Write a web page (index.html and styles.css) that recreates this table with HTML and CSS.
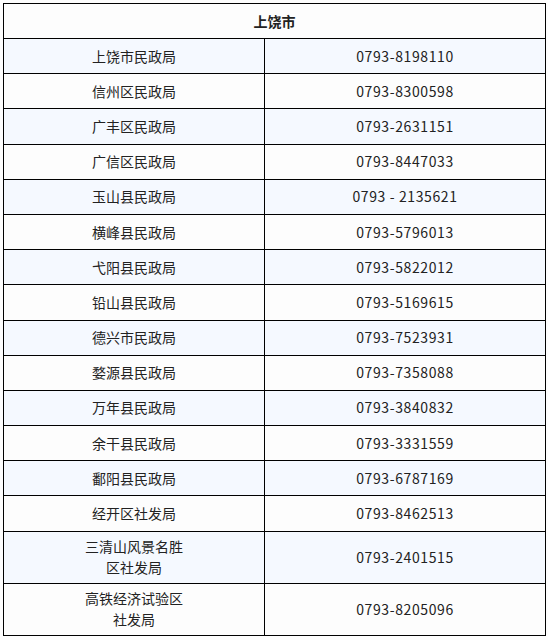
FILE: index.html
```html
<!DOCTYPE html>
<html lang="zh-CN">
<head>
<meta charset="utf-8">
<title>上饶市</title>
<link rel="stylesheet" href="styles.css">
</head>
<body>
<table class="contacts">
  <colgroup><col class="col-name"><col class="col-phone"></colgroup>
  <thead>
    <tr><th colspan="2">上饶市</th></tr>
  </thead>
  <tbody>
    <tr class="alt"><td>上饶市民政局</td><td class="tel">0793-8198110</td></tr>
    <tr><td>信州区民政局</td><td class="tel">0793-8300598</td></tr>
    <tr class="alt"><td>广丰区民政局</td><td class="tel">0793-2631151</td></tr>
    <tr><td>广信区民政局</td><td class="tel">0793-8447033</td></tr>
    <tr class="alt"><td>玉山县民政局</td><td class="tel">0793 - 2135621</td></tr>
    <tr><td>横峰县民政局</td><td class="tel">0793-5796013</td></tr>
    <tr class="alt"><td>弋阳县民政局</td><td class="tel">0793-5822012</td></tr>
    <tr><td>铅山县民政局</td><td class="tel">0793-5169615</td></tr>
    <tr class="alt"><td>德兴市民政局</td><td class="tel">0793-7523931</td></tr>
    <tr><td>婺源县民政局</td><td class="tel">0793-7358088</td></tr>
    <tr class="alt"><td>万年县民政局</td><td class="tel">0793-3840832</td></tr>
    <tr><td>余干县民政局</td><td class="tel">0793-3331559</td></tr>
    <tr class="alt"><td>鄱阳县民政局</td><td class="tel">0793-6787169</td></tr>
    <tr><td>经开区社发局</td><td class="tel">0793-8462513</td></tr>
    <tr class="alt"><td>三清山风景名胜<br>区社发局</td><td class="tel">0793-2401515</td></tr>
    <tr><td>高铁经济试验区<br>社发局</td><td class="tel">0793-8205096</td></tr>
  </tbody>
</table>
</body>
</html>
```
FILE: styles.css
```css
html, body {
  margin: 0;
  padding: 0;
  background: #fdfdfd;
}
body {
  padding: 3px 3px 0 3px;
  font-family: "Noto Sans CJK SC", "Noto Sans", sans-serif;
  font-size: 14px;
  color: #222;
}
.contacts {
  width: 542px;
  border-collapse: collapse;
  table-layout: fixed;
}
.col-name { width: 261px; }
.col-phone { width: 281px; }
.contacts th,
.contacts td {
  border: 1px solid #000;
  text-align: center;
  vertical-align: middle;
  padding: 4.5px 4px;
  line-height: 21px;
}
.contacts th {
  font-weight: bold;
  height: 25px;
}
.contacts td {
  height: 25.2px;
}
.contacts tr.alt td {
  background: #f5f9ff;
}
.tel {
  letter-spacing: 0.6px;
}
```
